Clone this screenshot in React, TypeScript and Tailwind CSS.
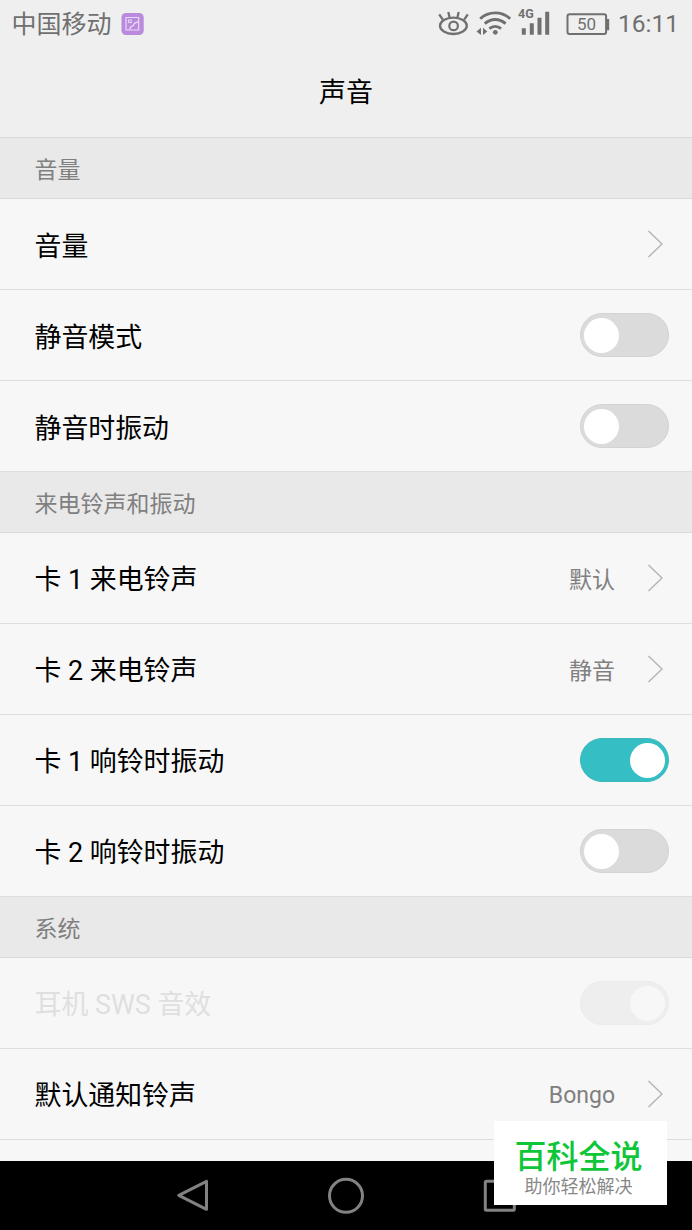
import React from "react";

type Item = {
  label: string;
  value?: string;
  toggle?: "on" | "off" | "disabled";
};

type Group = { title: string; labelPadding: string; valuePadding: string; items: Item[] };

const groups: Group[] = [
  {
    title: "音量",
    labelPadding: "pt-1.5",
    valuePadding: "pt-1.5",
    items: [
      { label: "音量" },
      { label: "静音模式", toggle: "off" },
      { label: "静音时振动", toggle: "off" },
    ],
  },
  {
    title: "来电铃声和振动",
    labelPadding: "pt-1",
    valuePadding: "pt-1.5",
    items: [
      { label: "卡 1 来电铃声", value: "默认" },
      { label: "卡 2 来电铃声", value: "静音" },
      { label: "卡 1 响铃时振动", toggle: "on" },
      { label: "卡 2 响铃时振动", toggle: "off" },
    ],
  },
  {
    title: "系统",
    labelPadding: "pt-1",
    valuePadding: "pt-1",
    items: [
      { label: "耳机 SWS 音效", toggle: "disabled" },
      { label: "默认通知铃声", value: "Bongo" },
    ],
  },
];

function Chevron() {
  return (
    <svg width="16" height="28" viewBox="0 0 16 28" fill="none" stroke="#b4b4b4" strokeWidth="1.4">
      <path d="M0.5 1 L14 14 L0.5 27" />
    </svg>
  );
}

const trackStyles = {
  on: "justify-end bg-[#35bfc4] border-[#3cb8bb]",
  off: "justify-start bg-[#dbdbdb] border-[#d3d3d3]",
  disabled: "justify-end bg-[#eeeeee] border-[#ebebeb]",
};

function Toggle({ state }: { state: "on" | "off" | "disabled" }) {
  return (
    <div className={`flex h-11 w-[89px] items-center rounded-full border px-[3px] ${trackStyles[state]}`}>
      <div className={`size-[35px] rounded-full ${state === "disabled" ? "bg-[#f7f7f7]" : "bg-white"}`} />
    </div>
  );
}

function Row({ item, group }: { item: Item; group: Group }) {
  const color = item.toggle === "disabled" ? "text-[#dfdfdf]" : "text-black";
  return (
    <div className="flex h-[91px] items-center border-b border-[#dedede] bg-[#f7f7f7] pl-[34.5px]">
      <span className={`flex-1 text-[26.9px] leading-10 ${group.labelPadding} ${color}`}>{item.label}</span>
      {item.toggle ? (
        <div className="mr-[23px]">
          <Toggle state={item.toggle} />
        </div>
      ) : (
        <div className="mr-7 flex items-center gap-[33px]">
          <span className={`text-[23px] leading-9 text-[#808080] ${group.valuePadding}`}>{item.value}</span>
          <Chevron />
        </div>
      )}
    </div>
  );
}

function StatusIcons() {
  return (
    <svg width="180" height="40" viewBox="0 0 180 40" fill="none" stroke="#707070">
      <ellipse cx="23.4" cy="21.8" rx="13.4" ry="8.2" strokeWidth="2.3" />
      <circle cx="23.6" cy="21.9" r="4.3" strokeWidth="2.2" />
      <path d="M9.2 10.3L12.8 15.6M18.3 8L19.6 13.6M28.7 8L27.4 13.6M37.8 10.3L34.2 15.6" strokeWidth="2.3" />
      <path d="M50.2 14.8C58.5 6.9 71.9 6.9 80.2 14.8M54.8 19.7C61 14.1 69.4 14.1 75.6 19.7M59.4 24.6C62.8 21.7 67.6 21.7 71 24.6" strokeWidth="2.9" />
      <circle cx="65.3" cy="28.3" r="2.4" fill="#707070" stroke="none" />
      <path d="M51 23.8V31L46.5 27.4ZM53 23.8V31L57.3 27.4Z" fill="#707070" stroke="none" />
      <text x="88" y="13.5" fill="#707070" stroke="none" className="text-[12.5px] font-bold">
        4G
      </text>
      <path d="M93.8 24.2V30.7M101.8 19.3V30.7M109.5 13.7V30.7M117.2 7.8V30.7" strokeWidth="4" />
      <rect x="137.5" y="10.3" width="38.6" height="19.6" rx="2" strokeWidth="2" />
      <path d="M177.8 15V26.2" strokeWidth="2.8" />
      <text x="156.6" y="26.2" textAnchor="middle" fill="#707070" stroke="none" className="text-[17px]">
        50
      </text>
    </svg>
  );
}

function StatusBar() {
  return (
    <div className="flex h-12 items-center justify-between pl-[11.5px] pr-[13px] text-[#707070]">
      <div className="flex items-center gap-[9.5px]">
        <span className="pt-0.5 text-[25px] leading-8">中国移动</span>
        <svg width="23" height="23" viewBox="0 0 23 23" fill="none">
          <rect x="0.5" y="0" width="22.2" height="22" rx="4.5" fill="#b98add" />
          <path d="M5 4.5H17.7V17H5Z" stroke="#ead8f6" strokeWidth="1.2" />
          <rect x="7.6" y="7" width="2.6" height="2.6" stroke="#ead8f6" />
          <path d="M8.5 17C9 14 10.5 13 12.4 12.7C12.6 10.5 14.5 9.2 17.5 9" stroke="#ead8f6" strokeWidth="1.3" />
        </svg>
      </div>
      <div className="flex items-center gap-2">
        <StatusIcons />
        <span className="text-[24.5px] leading-8">16:11</span>
      </div>
    </div>
  );
}

function NavBar() {
  return (
    <div className="flex h-[69px] items-center justify-center bg-black">
      <svg width="346" height="44" viewBox="0 0 346 44" fill="none" stroke="#828282" strokeWidth="3" strokeLinejoin="round">
        <path d="M33.5 7.3V35.3L5.8 21.3Z" />
        <circle cx="173" cy="21.8" r="16.5" />
        <rect x="312.3" y="7.3" width="29" height="29" rx="1" />
      </svg>
    </div>
  );
}

export default function App() {
  return (
    <div className="relative flex h-[1230px] w-[692px] flex-col overflow-hidden bg-[#f7f7f7] font-['Roboto','Noto_Sans_CJK_SC',sans-serif]">
      <header className="h-[138px] shrink-0 border-b border-[#d8d8d8] bg-[#efefef]">
        <StatusBar />
        <h1 className="pt-[25px] text-center text-[27px] leading-10 text-black">声音</h1>
      </header>
      <main className="flex-1">
        {groups.map((group) => (
          <section key={group.title}>
            <h2 className="flex h-[61px] items-center border-b border-[#dadada] bg-[#e9e9e9] pl-[34.5px] pt-1.5 text-[23px] text-[#808080]">
              {group.title}
            </h2>
            {group.items.map((item) => (
              <Row key={item.label} item={item} group={group} />
            ))}
          </section>
        ))}
      </main>
      <NavBar />
      <div className="absolute left-[494px] top-[1121px] flex h-[84px] w-[173px] flex-col items-center bg-white pr-1 pt-4">
        <span className="text-[32px] font-medium leading-10 text-[#0fc638]">百科全说</span>
        <span className="text-[18px] leading-5 text-[#888888]">助你轻松解决</span>
      </div>
    </div>
  );
}
